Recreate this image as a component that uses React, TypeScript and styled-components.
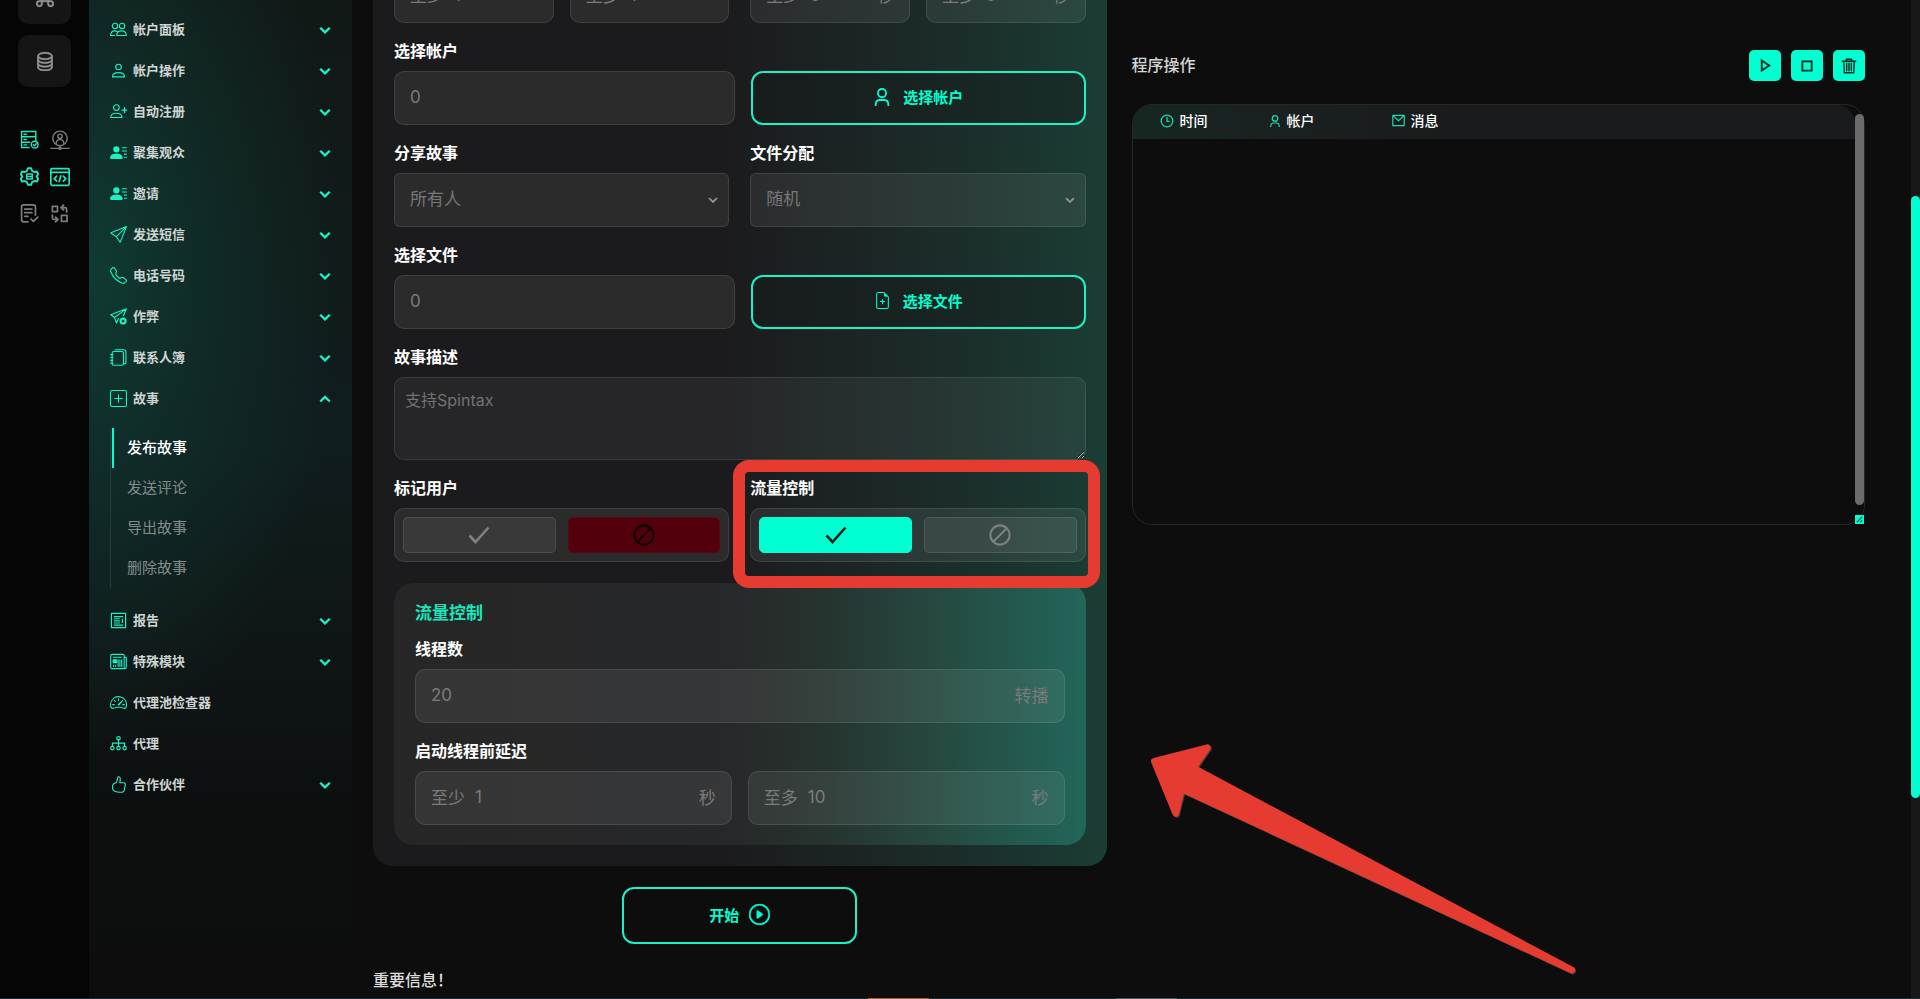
import React from "react";
import styled, { createGlobalStyle, css } from "styled-components";
import {
  BsCommand,
  BsDatabase,
  BsFillPersonLinesFill,
  BsSend,
  BsTelephone,
  BsPlusSquare,
  BsSpeedometer2,
  BsPlayCircle,
  BsFileEarmarkPlus,
} from "react-icons/bs";

const ACCENT = "#00ffd1";
const MINT = "#1cf0c4";
const RED = "#e53b31";

const GlobalStyle = createGlobalStyle`
  *, *::before, *::after { box-sizing: border-box; }
  body {
    margin: 0;
    background: #0d0d0e;
    color: #fff;
    font-family: Inter, "Noto Sans CJK SC", sans-serif;
    font-size: 16px;
  }
  button, input, select, textarea { font: inherit; color: inherit; }
  a { color: inherit; text-decoration: none; }
`;

/* ---------- icons ---------- */

const Stroke = styled.svg.attrs({ viewBox: "0 0 24 24", "aria-hidden": true })<{ $size?: number; $w?: number }>`
  width: ${(p) => p.$size ?? 17}px;
  height: ${(p) => p.$size ?? 17}px;
  flex: none;
  fill: none;
  stroke: currentColor;
  stroke-width: ${(p) => p.$w ?? 1.6};
  stroke-linecap: round;
  stroke-linejoin: round;
`;

const UsersIcon = () => (
  <Stroke>
    <circle cx="7" cy="7" r="3.8" />
    <circle cx="17" cy="7" r="3.8" />
    <path d="M9.500 20.500c0-4 3-6.500 7-6.500s6.500 2.500 6.500 6.500zM6.500 20.500H1c0-4 2.200-6.500 6-6.500 1.300 0 2.300.3 3 .8" />
  </Stroke>
);
const UserIcon = () => (
  <Stroke>
    <circle cx="12" cy="7" r="3.900" />
    <path d="M3.500 21c0-4 3.500-6 8.500-6s8.500 2 8.500 6z" />
  </Stroke>
);
const UserAddIcon = () => (
  <Stroke>
    <circle cx="9" cy="6.500" r="4" />
    <path d="M1 20.500c0-4 3.500-6 8-6s8 2 8 6z" />
    <path d="M20.500 6.500v7M17 10h7" strokeWidth="2" />
  </Stroke>
);
const SendBadgeIcon = () => (
  <Stroke>
    <path d="M12 15l-3 6-2.500-7.500L1 9.500 23 1l-4 10M6.500 13.500L22 2" />
    <circle cx="18.500" cy="18.500" r="3.500" strokeWidth="3" />
  </Stroke>
);
const BookIcon = () => (
  <Stroke>
    <rect x="3" y="3.500" width="16" height="19.500" rx="2.500" />
    <path d="M7 1h12c2 0 3.500 1.500 3.500 3v14.500c0 1.500-1 2.500-3 2.500" />
    <path d="M1 8h3M1 12h3M1 16h3M1 20h3" />
  </Stroke>
);
const ReportIcon = () => (
  <Stroke $w={1.7}>
    <path d="M2 2h20v20H2z" />
    <path d="M5.500 6.500h13M5.500 9.500h8.500M5.500 12.500h8.500M5.500 15.500h8.500M17.500 9.500v6M5.500 18.500h13" strokeLinecap="butt" />
  </Stroke>
);
const NewsIcon = () => (
  <Stroke $w={1.6}>
    <rect x="1" y="2" width="19" height="20" rx="2" />
    <path d="M20 6h3v14c0 1-1 2-2 2h-2M4.500 6h12" />
    <path d="M4.500 9.500h5v4h-5z" fill="currentColor" />
    <path d="M5 17v2M8 17v2M11.500 9.500v9.500M14 9.500v9.500M16.500 9.500v9.500" />
  </Stroke>
);
const TreeIcon = () => (
  <Stroke $w={1.7}>
    <circle cx="12" cy="4.500" r="2.400" />
    <circle cx="3.400" cy="18.500" r="2.400" />
    <circle cx="12" cy="18.500" r="2.400" />
    <circle cx="20.600" cy="18.500" r="2.400" />
    <path d="M12 7v9M3.400 16v-4.500h17.200V16" />
  </Stroke>
);
const ThumbIcon = () => (
  <Stroke>
    <path d="M8.500 9.500C10.500 7.500 10.500 4 11 2c.4-1.500 2.800-1.300 3.300.8.500 2.300 0 4.700-.5 6.700h5.700c1.800 0 2.400 1.500 2 3l-1.500 8c-.3 1.300-1.200 2-2.500 2.200-3.500.5-7.300.3-10-.8C4.500 20.800 3.500 19.300 3.500 16c0-3.500 1.500-6 5-6.500z" />
  </Stroke>
);
const Chevron = ({ up = false, size = 12 }: { up?: boolean; size?: number }) => (
  <Stroke $size={size} $w={4.800}>
    <path d={up ? "M2.500 17l9.500-9 9.500 9" : "M2.500 7.500l9.500 9 9.500-9"} strokeLinecap="butt" strokeLinejoin="miter" />
  </Stroke>
);
const ServerCheckIcon = () => (
  <Stroke $size={19} $w={1.8}>
    <path d="M11.500 22H2V2h18v11M2 8.500h18M2 15.500h10.500M5 5.300h3M5 12h3M5 18.800h3" />
    <circle cx="18.500" cy="18.500" r="4.300" />
    <path d="M16.700 18.500l1.500 1.500 2.300-2.700" />
  </Stroke>
);
const NetworkUserIcon = () => (
  <Stroke $size={20} $w={1.7}>
    <circle cx="12" cy="10" r="8.700" />
    <circle cx="12" cy="7.500" r="2.600" />
    <path d="M7.500 16c0-3 1.800-4.500 4.500-4.500s4.500 1.500 4.500 4.500M1 22h9M14 22h9M12 19v1.500" />
    <circle cx="12" cy="22" r="1.300" />
  </Stroke>
);
const GearIcon = () => (
  <Stroke $size={19} $w={2.400}>
    <path d="M10 1.500h4l1.300 3.300 2.700 1.500 3.300-.6 1.700 3.300-2 3 2 3-1.700 3.300-3.300-.6-2.700 1.500L14 22.500h-4l-1.300-3.300L6 17.700l-3.300.6L1 15l2-3-2-3 1.700-3.300 3.300.6 2.700-1.500z" />
    <path d="M8.500 8.800h7v6.400h-7zM8.500 12h7" strokeWidth="1.800" />
  </Stroke>
);
const CodeIcon = () => (
  <Stroke $size={20} $w={2}>
    <rect x="1" y="2" width="22" height="20" rx="1.500" />
    <path d="M1 6.500h22M8 11l-3 3 3 3M16 11l3 3-3 3M13 10.500l-2 7" />
  </Stroke>
);
const DocCheckIcon = () => (
  <Stroke $size={19} $w={2.200}>
    <path d="M10 22.500H4.500C3 22.500 2 21.500 2 20V3.500C2 2 3 1.200 4.500 1.200H17c1.500 0 2.500 1 2.500 2.500V14M6 6.500h9M6 11h9M6 15.500h4M14 19l3 3 5.500-5.500" />
  </Stroke>
);
const SwapIcon = () => (
  <Stroke $size={19} $w={2.200}>
    <path d="M3 3h6.500v6.500H3zM14.500 14.500h7V22h-7zM21 10V6.500c0-1.500-.5-2-2-2h-4.500M17 1.500l-3 3 3 3M3 14v3.500c0 1.500.5 2 2 2h4.500M7 16.500l3 3-3 3" />
  </Stroke>
);
const UserOpenIcon = ({ size = 18 }: { size?: number }) => (
  <Stroke $size={size} $w={2.400}>
    <circle cx="12" cy="6.800" r="5.500" />
    <path d="M3.500 24v-1c0-5 2.500-7 5.500-7h6c3 0 5.500 2 5.500 7v1" strokeLinecap="butt" />
  </Stroke>
);
const ClockIcon = () => (
  <Stroke $size={14} $w={2.200}>
    <circle cx="12" cy="12" r="10" />
    <path d="M12 6v6.500h4" />
  </Stroke>
);
const MailIcon = () => (
  <Stroke $size={13} $w={2.200}>
    <path d="M1.500 2.500h21v19h-21zM2 3l10 9.500L22 3" />
  </Stroke>
);
const CheckIcon = () => (
  <Stroke $size={24} $w={2.600}>
    <path d="M2.500 12.500L8.500 19 21.500 4.500" strokeLinejoin="miter" strokeLinecap="butt" />
  </Stroke>
);
const BanIcon = () => (
  <Stroke $size={22} $w={2.200}>
    <circle cx="12" cy="12" r="10.500" />
    <path d="M5 19L19 5" />
  </Stroke>
);
const PlayIcon = () => (
  <Stroke $size={15} $w={3}>
    <path d="M6 4v16L18 12z" strokeLinejoin="miter" />
  </Stroke>
);
const StopIcon = () => (
  <Stroke $size={14} $w={3.200}>
    <path d="M4 4h16v16H4z" strokeLinejoin="miter" />
  </Stroke>
);
const TrashIcon = () => (
  <Stroke $size={16} $w={2.200}>
    <path d="M2 5h20M8 5V2h8v3M4 5l1 17h14l1-17M8.500 8v11M12 8v11M15.500 8v11" />
  </Stroke>
);

/* ---------- page frame ---------- */

const Page = styled.div`
  position: relative;
  display: flex;
  height: 100vh;
  overflow: hidden;
`;

const Rail = styled.nav`
  flex: 0 0 89px;
  display: flex;
  flex-direction: column;
  align-items: center;
  background: #050506;
`;

const RailTile = styled.button`
  width: 53px;
  height: 52px;
  margin: 0 0 11px;
  padding: 0;
  display: grid;
  place-items: center;
  flex: none;
  border: 0;
  border-radius: 10px;
  background: #151516;
  color: #9a9a9a;
  font-size: 20px;

  > svg { stroke: currentColor; stroke-width: 0.5px; }
`;

const RailTiles = styled.div`
  margin-top: -28px;
  display: flex;
  flex-direction: column;
`;

const RailGrid = styled.div`
  margin-top: 23px;
  display: grid;
  grid-template-columns: 30px 30px;
  grid-auto-rows: 37px;
`;

const RailButton = styled.button<{ $on?: boolean }>`
  padding: 0;
  border: 0;
  background: none;
  display: grid;
  place-items: center;
  color: ${(p) => (p.$on ? "#22e8be" : "#7d7d7e")};
`;

const Sidebar = styled.nav`
  flex: 0 0 263px;
  padding: 9px 21px 0;
  overflow: hidden;
  background:
    radial-gradient(ellipse 250px 480px at 0% 270px, #0f3b32 0%, rgba(16, 48, 43, 0.75) 45%, rgba(15, 32, 31, 0) 100%),
    linear-gradient(180deg, #111917 0%, #101d1e 45%, #0f1515 66%, #0d0f0f 82%, #0d0d0e 100%);
`;

const MenuButton = styled.button`
  width: 100%;
  height: 41px;
  padding: 0;
  display: flex;
  align-items: center;
  gap: 6px;
  border: 0;
  background: none;
  color: ${MINT};
  font-size: 13px;
  font-weight: 700;
  text-align: left;

  > svg:first-child {
    flex: none;
    width: 17px;
    height: 17px;
  }
`;

const MenuText = styled.span`
  flex: 1;
  padding-bottom: 2px;
  color: #cfd5d3;
`;

const SubMenu = styled.ul`
  margin: 9px 0 12px;
  padding: 0;
  list-style: none;
  border-left: 1px solid #23393a;
`;

const SubLink = styled.a<{ $active?: boolean }>`
  display: flex;
  align-items: center;
  height: 40px;
  padding: 0 0 4px 13px;
  margin-left: 1px;
  border-left: 2px solid ${(p) => (p.$active ? ACCENT : "transparent")};
  color: ${(p) => (p.$active ? "#ffffff" : "#848c8b")};
  font-size: 15px;
  font-weight: ${(p) => (p.$active ? 500 : 400)};
`;

const Main = styled.main`
  flex: 1;
  min-width: 0;
  padding: 0 46px 0 21px;
  display: grid;
  grid-template-columns: minmax(0, 1fr) minmax(0, 1fr);
  gap: 25px;
  align-items: start;
`;

const PageTrack = styled.div`
  flex: 0 0 9px;
  padding-top: 196px;
  background: #17181a;
`;

const PageThumb = styled.div`
  height: 602px;
  border-radius: 5px;
  background: ${ACCENT};
`;

/* ---------- form ---------- */

const FormColumn = styled.form`
  margin: -82px 0 0;
  display: flex;
  flex-direction: column;
`;

const Card = styled.div`
  padding: 21px;
  border-radius: 20px;
  background: linear-gradient(90deg, #1b1b1d 0%, #1b1b1d 48%, #1c2524 66%, #1b302c 84%, #1b3d35 100%);
`;

const Stack = styled.div`
  display: flex;
  flex-direction: column;
  gap: 18px;
`;

const Pair = styled.div<{ $gap?: number }>`
  display: grid;
  grid-template-columns: minmax(0, 1fr) minmax(0, 1fr);
  gap: ${(p) => p.$gap ?? 21}px;
`;

const PickRow = styled.div`
  display: grid;
  grid-template-columns: minmax(0, 341fr) minmax(0, 334fr);
  gap: 16px;
`;

const Field = styled.div`
  display: flex;
  flex-direction: column;
  gap: 10px;
`;

const labelText = css`
  height: 20px;
  line-height: 20px;
  font-size: 16px;
  font-weight: 700;
  color: #fff;
`;

const Caption = styled.label`
  ${labelText}
`;

const surface = css`
  border: 1px solid rgba(255, 255, 255, 0.1);
  border-radius: 10px;
  background: rgba(255, 255, 255, 0.07);
  color: #7b7b7c;
`;

const InputBox = styled.div`
  ${surface}
  height: 54px;
  padding: 0 15px;
  display: flex;
  align-items: center;
  gap: 10px;
  font-size: 17px;
`;

const Affix = styled.span`
  padding-bottom: 3px;
`;

const BareInput = styled.input`
  flex: 1;
  min-width: 0;
  width: 0;
  padding: 0 0 2px;
  border: 0;
  outline: 0;
  background: none;
  &::placeholder { color: #7b7b7c; opacity: 1; }
`;

const SelectBox = styled.div`
  ${surface}
  height: 54px;
  border-radius: 6px;
  display: grid;
  align-items: center;
  color: #767777;

  > * { grid-area: 1 / 1; }
  > svg { justify-self: end; margin-right: 10px; pointer-events: none; color: #8d9190; }
`;

const Select = styled.select`
  width: 100%;
  height: 52px;
  padding: 0 15px 2px;
  border: 0;
  outline: 0;
  appearance: none;
  background: none;
  font-size: 17px;
`;

const OutlineButton = styled.button`
  height: 54px;
  padding: 0 0 3px;
  display: flex;
  align-items: center;
  justify-content: center;
  gap: 12px;
  border: 2px solid ${MINT};
  border-radius: 12px;
  background: #131b1966;
  color: ${ACCENT};
  font-size: 15px;
  font-weight: 700;
`;

const StartButton = styled(OutlineButton)`
  align-self: center;
  width: 235px;
  height: 57px;
  margin-top: 21px;
  padding: 0 0 2px;
  gap: 10px;
  background: none;
  > svg { font-size: 21px; stroke: currentColor; stroke-width: 0.5px; }
`;

const Description = styled.textarea`
  ${surface}
  display: block;
  width: 100%;
  height: 83px;
  padding: 11px 10px;
  outline: 0;
  resize: vertical;
  background: rgba(255, 255, 255, 0.05);
  font-size: 16px;
  line-height: 22px;
  &::placeholder { color: #727373; opacity: 1; }
`;

const ToggleWrap = styled.div`
  position: relative;
`;

const ToggleGroup = styled.fieldset`
  min-width: 0;
  margin: 0;
  padding: 0;
  border: 0;
`;

const ToggleTitle = styled.legend`
  ${labelText}
  margin-bottom: 10px;
  padding: 0;
`;

const ToggleBox = styled.div`
  ${surface}
  height: 54px;
  padding: 8px;
  display: grid;
  grid-template-columns: 1fr 1fr;
  gap: 12px;
`;

const tones = {
  idle: css`
    border-color: rgba(255, 255, 255, 0.1);
    background: rgba(255, 255, 255, 0.07);
    color: #7f8181;
  `,
  yes: css`
    border-color: ${ACCENT};
    background: ${ACCENT};
    color: #10201c;
  `,
  no: css`
    border-color: #5c0812;
    background: #52000b;
    color: #0e0205;
  `,
};

const ToggleOption = styled.label<{ $tone: keyof typeof tones }>`
  display: grid;
  place-items: center;
  border: 1px solid;
  border-radius: 5px;
  cursor: pointer;
  ${(p) => tones[p.$tone]}
  > * { grid-area: 1 / 1; }
`;

const HiddenRadio = styled.input`
  appearance: none;
  width: 1px;
  height: 1px;
  margin: 0;
  opacity: 0;
`;

const Highlight = styled.div`
  position: absolute;
  z-index: 2;
  inset: -18px -14px -26px -17px;
  border: 12px solid ${RED};
  border-radius: 16px;
  pointer-events: none;
`;

const FlowCard = styled.section`
  margin-top: 21px;
  padding: 20px 21px;
  border-radius: 20px;
  background: linear-gradient(90deg, #262627 0%, #272829 48%, #26332f 62%, #254b42 80%, #22665a 100%);
`;

const FlowTitle = styled.h3`
  margin: 0 0 16px;
  height: 20px;
  line-height: 20px;
  font-size: 17px;
  font-weight: 700;
  color: #19e6bc;
`;

const Notice = styled.h2`
  margin: 26px 0 0;
  line-height: 20px;
  font-size: 16px;
  font-weight: 500;
  color: #dcdcdc;
`;

/* ---------- log ---------- */

const LogColumn = styled.section`
  position: relative;
  padding-top: 50px;
`;

const LogHeader = styled.header`
  display: flex;
  align-items: center;
  justify-content: space-between;
  height: 31px;
  margin-bottom: 23px;
`;

const LogTitle = styled.h2`
  margin: 0;
  padding-bottom: 4px;
  font-size: 16px;
  font-weight: 500;
  color: #d4d5d4;
`;

const Actions = styled.div`
  display: flex;
  gap: 10px;
`;

const ActionButton = styled.button`
  width: 32px;
  height: 31px;
  padding: 0;
  display: grid;
  place-items: center;
  border: 0;
  border-radius: 5px;
  background: ${ACCENT};
  color: #0d2a24;
`;

const LogPanel = styled.div`
  display: flex;
  align-items: flex-start;
  height: 421px;
  border: 1px solid #262728;
  border-radius: 20px;
`;

const LogTable = styled.table`
  flex: 1;
  table-layout: fixed;
  border-spacing: 0;
  border-radius: 19px 19px 0 0;
  background: linear-gradient(90deg, #162722 0%, #1a2120 18%, #1a1b1c 45%);
`;

const Th = styled.th<{ $width?: number }>`
  width: ${(p) => (p.$width ? `${p.$width}px` : "auto")};
  height: 34px;
  padding: 0;
  font-size: 14px;
  font-weight: 500;
  text-align: left;

  &:first-child { padding-left: 27px; }
`;

const ThLabel = styled.span`
  display: flex;
  align-items: center;
  gap: 6px;
  padding-bottom: 3px;
  line-height: 18px;
  > svg { color: #1bd9b2; }
`;

const LogScroll = styled.div`
  flex: 0 0 9px;
  align-self: stretch;
  display: flex;
  flex-direction: column;
  gap: 10px;
  padding-top: 9px;
`;

const LogThumb = styled.div`
  flex: 1;
  border-radius: 5px;
  background: #6b6b6d;
`;

const Grip = styled.div`
  height: 9px;
  background: ${ACCENT};
  display: grid;
  place-items: center;
  color: #0b4c40;
`;

const ArrowMark = styled.svg`
  position: absolute;
  left: -1px;
  top: 721px;
  width: 460px;
  height: 279px;
  pointer-events: none;
  fill: ${RED};
  stroke: ${RED};
  stroke-width: 20;
  stroke-linejoin: round;
  filter: drop-shadow(1px 1px 0 rgba(150, 110, 105, 0.5));
`;

const BottomEdge = styled.div`
  position: absolute;
  left: 0;
  right: 0;
  bottom: 0;
  height: 1px;
  background: linear-gradient(
    90deg,
    #1b2930 0 868px,
    #a85a28 868px 929px,
    #1b2930 929px 1116px,
    #4a5357 1116px 1177px,
    #1b2930 1177px
  );
`;

/* ---------- data ---------- */

type MenuEntry = { text: string; icon: React.ReactNode; leaf?: boolean };

const topMenu: MenuEntry[] = [
  { text: "帐户面板", icon: <UsersIcon /> },
  { text: "帐户操作", icon: <UserIcon /> },
  { text: "自动注册", icon: <UserAddIcon /> },
  { text: "聚集观众", icon: <BsFillPersonLinesFill /> },
  { text: "邀请", icon: <BsFillPersonLinesFill /> },
  { text: "发送短信", icon: <BsSend /> },
  { text: "电话号码", icon: <BsTelephone /> },
  { text: "作弊", icon: <SendBadgeIcon /> },
  { text: "联系人簿", icon: <BookIcon /> },
];

const bottomMenu: MenuEntry[] = [
  { text: "报告", icon: <ReportIcon /> },
  { text: "特殊模块", icon: <NewsIcon /> },
  { text: "代理池检查器", icon: <BsSpeedometer2 />, leaf: true },
  { text: "代理", icon: <TreeIcon />, leaf: true },
  { text: "合作伙伴", icon: <ThumbIcon /> },
];

const storyLinks = ["发布故事", "发送评论", "导出故事", "删除故事"];

/* ---------- pieces ---------- */

function MenuRow({ entry, open }: { entry: MenuEntry; open?: boolean }) {
  return (
    <MenuButton type="button" aria-expanded={entry.leaf ? undefined : !!open}>
      {entry.icon}
      <MenuText>{entry.text}</MenuText>
      {!entry.leaf && <Chevron up={open} />}
    </MenuButton>
  );
}

function NumberField(p: { prefix?: string; suffix?: string; value: string; id?: string; name: string }) {
  return (
    <InputBox>
      {p.prefix && <Affix>{p.prefix}</Affix>}
      <BareInput id={p.id} aria-label={p.name} placeholder={p.value} />
      {p.suffix && <Affix>{p.suffix}</Affix>}
    </InputBox>
  );
}

function Toggle({ title, name, initial, marked }: { title: string; name: string; initial: boolean; marked?: boolean }) {
  const [on, setOn] = React.useState(initial);
  return (
    <ToggleWrap>
      <ToggleGroup>
        <ToggleTitle>{title}</ToggleTitle>
        <ToggleBox>
          <ToggleOption $tone={on ? "yes" : "idle"}>
            <HiddenRadio type="radio" name={name} checked={on} onChange={() => setOn(true)} aria-label="on" />
            <CheckIcon />
          </ToggleOption>
          <ToggleOption $tone={on ? "idle" : "no"}>
            <HiddenRadio type="radio" name={name} checked={!on} onChange={() => setOn(false)} aria-label="off" />
            <BanIcon />
          </ToggleOption>
        </ToggleBox>
      </ToggleGroup>
      {marked && <Highlight />}
    </ToggleWrap>
  );
}

export default function App() {
  return (
    <Page>
      <GlobalStyle />
      <Rail>
        <RailTiles>
          <RailTile type="button" aria-label="command"><BsCommand /></RailTile>
          <RailTile type="button" aria-label="database"><BsDatabase /></RailTile>
        </RailTiles>
        <RailGrid>
          <RailButton type="button" $on aria-label="server"><ServerCheckIcon /></RailButton>
          <RailButton type="button" aria-label="network"><NetworkUserIcon /></RailButton>
          <RailButton type="button" $on aria-label="settings"><GearIcon /></RailButton>
          <RailButton type="button" $on aria-label="code"><CodeIcon /></RailButton>
          <RailButton type="button" aria-label="document"><DocCheckIcon /></RailButton>
          <RailButton type="button" aria-label="swap"><SwapIcon /></RailButton>
        </RailGrid>
      </Rail>

      <Sidebar>
        {topMenu.map((m) => <MenuRow key={m.text} entry={m} />)}
        <MenuRow entry={{ text: "故事", icon: <BsPlusSquare /> }} open />
        <SubMenu>
          {storyLinks.map((t, i) => (
            <li key={t}><SubLink href="#" $active={i === 0}>{t}</SubLink></li>
          ))}
        </SubMenu>
        {bottomMenu.map((m) => <MenuRow key={m.text} entry={m} />)}
      </Sidebar>

      <Main>
        <FormColumn onSubmit={(e) => e.preventDefault()}>
          <Card>
            <Stack>
              <Pair>
                <Field>
                  <Caption as="span" />
                  <Pair $gap={16}>
                    <NumberField prefix="至少" value="1" name="min" />
                    <NumberField prefix="至多" value="1" name="max" />
                  </Pair>
                </Field>
                <Field>
                  <Caption as="span" />
                  <Pair $gap={16}>
                    <NumberField prefix="至少" value="5" suffix="秒" name="min seconds" />
                    <NumberField prefix="至多" value="5" suffix="秒" name="max seconds" />
                  </Pair>
                </Field>
              </Pair>

              <Field>
                <Caption htmlFor="accounts">选择帐户</Caption>
                <PickRow>
                  <NumberField id="accounts" value="0" name="选择帐户" />
                  <OutlineButton type="button"><UserOpenIcon />选择帐户</OutlineButton>
                </PickRow>
              </Field>

              <Pair>
                <Field>
                  <Caption htmlFor="share">分享故事</Caption>
                  <SelectBox>
                    <Select id="share"><option>所有人</option></Select>
                    <Chevron size={10} />
                  </SelectBox>
                </Field>
                <Field>
                  <Caption htmlFor="spread">文件分配</Caption>
                  <SelectBox>
                    <Select id="spread"><option>随机</option></Select>
                    <Chevron size={10} />
                  </SelectBox>
                </Field>
              </Pair>

              <Field>
                <Caption htmlFor="files">选择文件</Caption>
                <PickRow>
                  <NumberField id="files" value="0" name="选择文件" />
                  <OutlineButton type="button"><BsFileEarmarkPlus size={17} />选择文件</OutlineButton>
                </PickRow>
              </Field>

              <Field>
                <Caption htmlFor="about">故事描述</Caption>
                <Description id="about" placeholder="支持Spintax" />
              </Field>

              <Pair>
                <Toggle title="标记用户" name="tag" initial={false} />
                <Toggle title="流量控制" name="flow" initial marked />
              </Pair>
            </Stack>

            <FlowCard>
              <FlowTitle>流量控制</FlowTitle>
              <Stack>
                <Field>
                  <Caption htmlFor="threads">线程数</Caption>
                  <NumberField id="threads" value="20" suffix="转播" name="线程数" />
                </Field>
                <Field>
                  <Caption htmlFor="delay">启动线程前延迟</Caption>
                  <Pair $gap={16}>
                    <NumberField id="delay" prefix="至少" value="1" suffix="秒" name="至少" />
                    <NumberField prefix="至多" value="10" suffix="秒" name="至多" />
                  </Pair>
                </Field>
              </Stack>
            </FlowCard>
          </Card>

          <StartButton type="submit">开始<BsPlayCircle /></StartButton>
          <Notice>重要信息！</Notice>
        </FormColumn>

        <LogColumn>
          <LogHeader>
            <LogTitle>程序操作</LogTitle>
            <Actions>
              <ActionButton type="button" aria-label="play"><PlayIcon /></ActionButton>
              <ActionButton type="button" aria-label="stop"><StopIcon /></ActionButton>
              <ActionButton type="button" aria-label="delete"><TrashIcon /></ActionButton>
            </Actions>
          </LogHeader>
          <LogPanel>
            <LogTable>
              <thead>
                <tr>
                  <Th $width={136}><ThLabel><ClockIcon />时间</ThLabel></Th>
                  <Th $width={123}><ThLabel><UserOpenIcon size={12} />帐户</ThLabel></Th>
                  <Th><ThLabel><MailIcon />消息</ThLabel></Th>
                </tr>
              </thead>
            </LogTable>
            <LogScroll>
              <LogThumb />
              <Grip>
                <Stroke $size={7} $w={4}><path d="M4 20L20 4M16 20l4-4" /></Stroke>
              </Grip>
            </LogScroll>
          </LogPanel>
          <ArrowMark viewBox="0 0 1380 837" aria-hidden="true">
            <path d="M70 121L229 80L187 141L1322 747L152 204L134 277Z" />
          </ArrowMark>
        </LogColumn>
      </Main>

      <PageTrack><PageThumb /></PageTrack>
      <BottomEdge />
    </Page>
  );
}
